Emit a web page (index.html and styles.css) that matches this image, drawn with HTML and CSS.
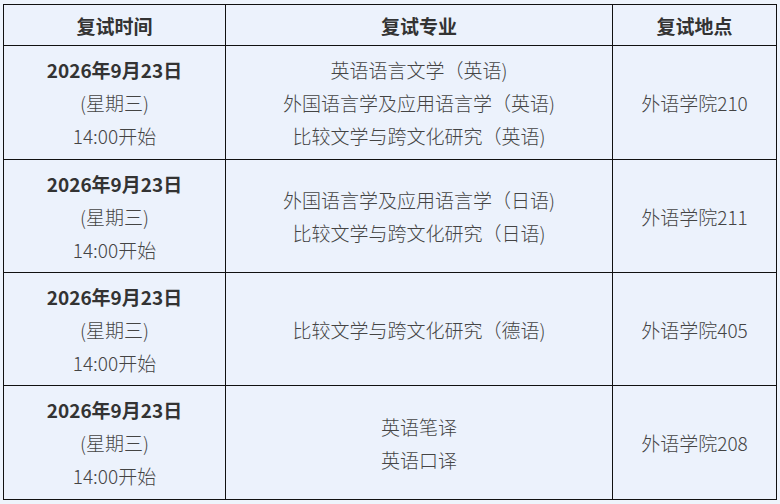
FILE: index.html
```html
<!DOCTYPE html>
<html lang="zh-CN">
<head>
<meta charset="utf-8">
<title>复试安排</title>
<link rel="stylesheet" href="styles.css">
</head>
<body>
<table class="schedule">
  <colgroup>
    <col class="c-time">
    <col class="c-major">
    <col class="c-place">
  </colgroup>
  <thead>
    <tr class="head">
      <th>复试时间</th>
      <th>复试专业</th>
      <th>复试地点</th>
    </tr>
  </thead>
  <tbody>
    <tr class="row">
      <td><div class="date">2026年9月23日</div><div>(星期三)</div><div>14:00开始</div></td>
      <td><div>英语语言文学（英语)</div><div>外国语言学及应用语言学（英语)</div><div>比较文学与跨文化研究（英语)</div></td>
      <td>外语学院210</td>
    </tr>
    <tr class="row">
      <td><div class="date">2026年9月23日</div><div>(星期三)</div><div>14:00开始</div></td>
      <td><div>外国语言学及应用语言学（日语)</div><div>比较文学与跨文化研究（日语)</div></td>
      <td>外语学院211</td>
    </tr>
    <tr class="row">
      <td><div class="date">2026年9月23日</div><div>(星期三)</div><div>14:00开始</div></td>
      <td><div>比较文学与跨文化研究（德语)</div></td>
      <td>外语学院405</td>
    </tr>
    <tr class="row">
      <td><div class="date">2026年9月23日</div><div>(星期三)</div><div>14:00开始</div></td>
      <td><div>英语笔译</div><div>英语口译</div></td>
      <td>外语学院208</td>
    </tr>
  </tbody>
</table>
</body>
</html>
```

FILE: styles.css
```css
html, body {
  margin: 0;
  padding: 0;
  background: #eef4fc;
}
body {
  padding: 4px 0 0 3px;
  font-family: "Noto Sans CJK SC", "Noto Sans", sans-serif;
  color: #444;
}
.schedule {
  border-collapse: collapse;
  table-layout: fixed;
  width: 773px;
  background: #ecf2fc;
}
.c-time { width: 222px; }
.c-major { width: 387px; }
.c-place { width: 164px; }
.schedule th,
.schedule td {
  border: 1px solid #111;
  text-align: center;
  vertical-align: middle;
  padding: 0;
  font-size: 19px;
  font-weight: 300;
  line-height: 33px;
}
.schedule th {
  height: 40px;
  font-weight: 700;
  color: #333;
}
.row td {
  height: 112px;
}
.row:first-child td,
.row:last-child td {
  height: 113px;
}
.date {
  font-weight: 700;
  color: #333;
}
```
